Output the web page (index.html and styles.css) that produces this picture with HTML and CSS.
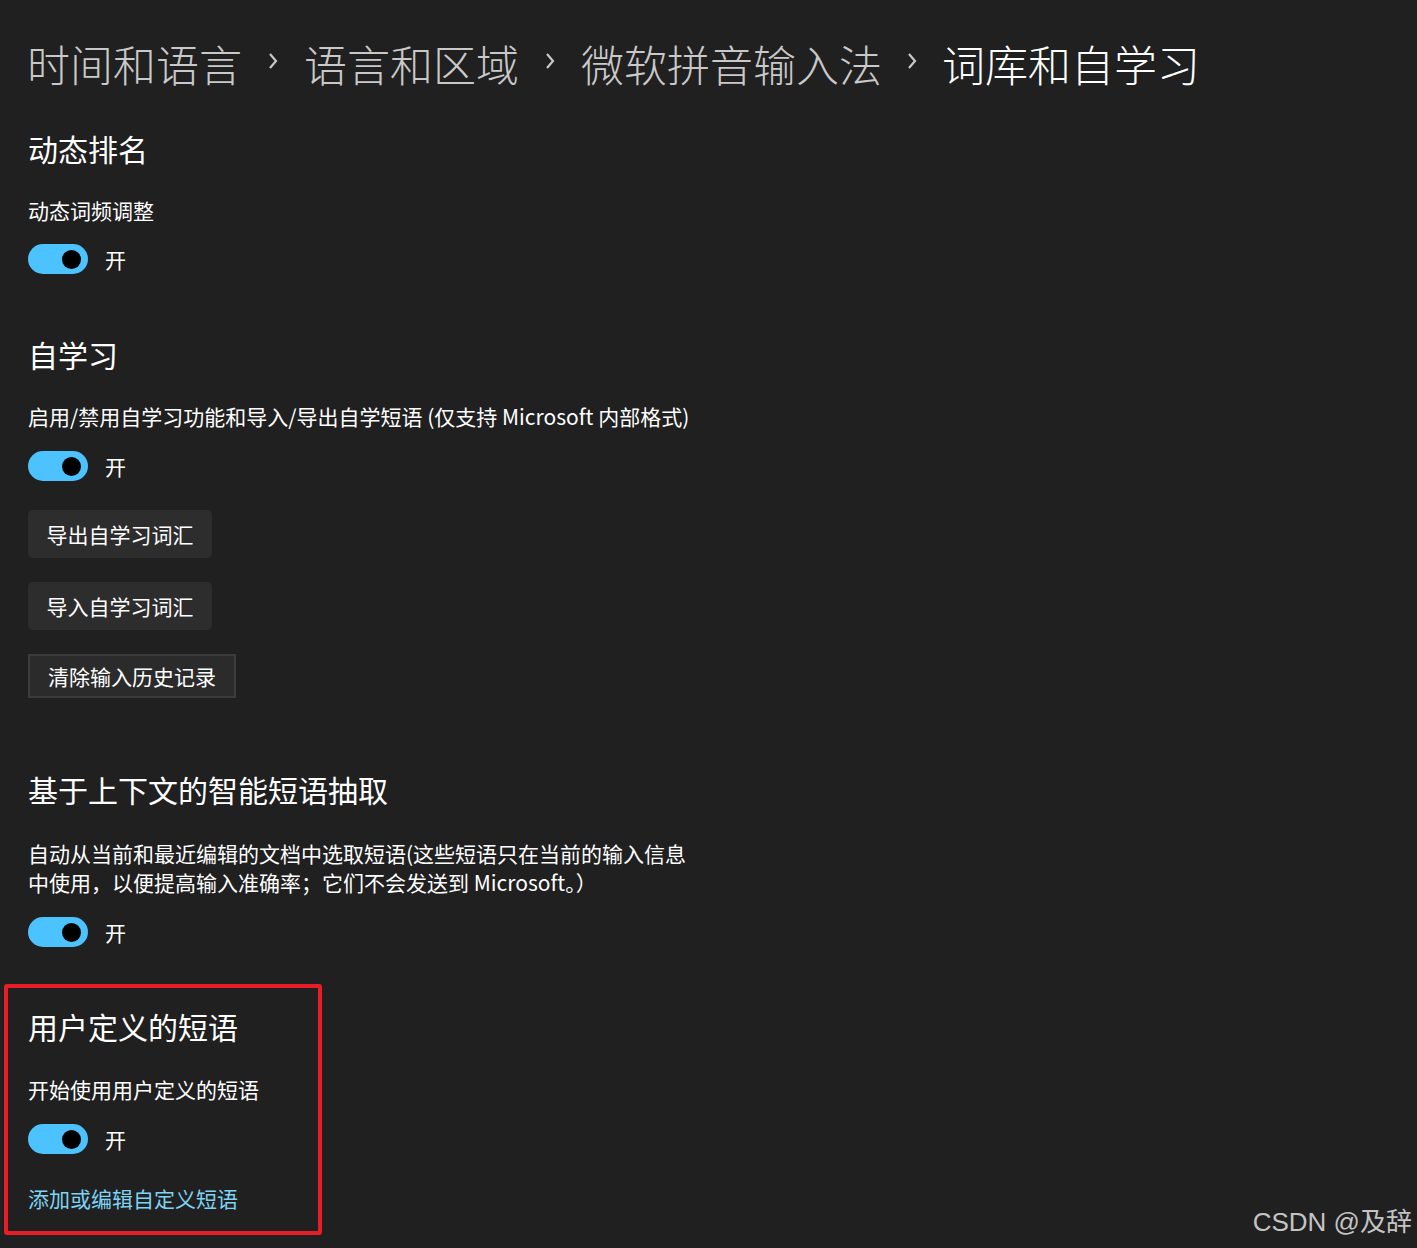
FILE: index.html
```html
<!DOCTYPE html>
<html lang="zh-CN">
<head>
<meta charset="utf-8">
<link rel="stylesheet" href="styles.css">
</head>
<body>
<div class="page">
  <nav class="crumbs">
    <span class="crumb">时间和语言</span>
    <span class="sep"><svg width="14" height="20" viewBox="0 0 14 20"><polyline points="4,3 10,10 4,17" fill="none" stroke="#c8c8c8" stroke-width="2.2"/></svg></span>
    <span class="crumb">语言和区域</span>
    <span class="sep"><svg width="14" height="20" viewBox="0 0 14 20"><polyline points="4,3 10,10 4,17" fill="none" stroke="#c8c8c8" stroke-width="2.2"/></svg></span>
    <span class="crumb">微软拼音输入法</span>
    <span class="sep last"><svg width="14" height="20" viewBox="0 0 14 20"><polyline points="4,3 10,10 4,17" fill="none" stroke="#c8c8c8" stroke-width="2.2"/></svg></span>
    <span class="crumb current">词库和自学习</span>
  </nav>

  <section class="sec first">
    <h2 class="heading">动态排名</h2>
    <p class="label">动态词频调整</p>
    <div class="toggle-row"><span class="toggle"><span class="knob"></span></span><span class="state">开</span></div>
  </section>

  <section class="sec s2">
    <h2 class="heading">自学习</h2>
    <p class="label">启用/禁用自学习功能和导入/导出自学短语 (仅支持 Microsoft 内部格式)</p>
    <div class="toggle-row r2"><span class="toggle"><span class="knob"></span></span><span class="state">开</span></div>
    <div class="btns">
      <button class="btn">导出自学习词汇</button>
      <button class="btn">导入自学习词汇</button>
      <button class="btn square">清除输入历史记录</button>
    </div>
  </section>

  <section class="sec s3">
    <h2 class="heading">基于上下文的智能短语抽取</h2>
    <p class="label desc">自动从当前和最近编辑的文档中选取短语(这些短语只在当前的输入信息中使用，以便提高输入准确率；它们不会发送到 Microsoft。）</p>
    <div class="toggle-row r2"><span class="toggle"><span class="knob"></span></span><span class="state">开</span></div>
  </section>

  <section class="sec boxed">
    <h2 class="heading">用户定义的短语</h2>
    <p class="label lb">开始使用用户定义的短语</p>
    <div class="toggle-row r2"><span class="toggle"><span class="knob"></span></span><span class="state">开</span></div>
    <a class="link">添加或编辑自定义短语</a>
  </section>
</div>
<div class="watermark">CSDN @及辞</div>
</body>
</html>
```

FILE: styles.css
```css
html, body {
  margin: 0;
  padding: 0;
  background: #202020;
  height: 100%;
}
body {
  font-family: "Noto Sans CJK SC", "Open Sans", sans-serif;
  color: #ffffff;
  position: relative;
  overflow: hidden;
}
.page {
  padding: 34px 0 0 27px;
}
.crumbs {
  display: flex;
  align-items: center;
  height: 58px;
  font-size: 43px;
  line-height: 58px;
  font-weight: 300;
}
.crumb {
  color: #c9c9c9;
  white-space: nowrap;
}
.crumb.current {
  color: #ffffff;
}
.sep {
  width: 62px;
  display: flex;
  justify-content: center;
  align-items: center;
  margin-top: -4px;
}
.sep.last { width: 60px; }
.sep svg { display: block; }

.heading {
  margin: 0 0 0 1px;
  font-size: 30px;
  line-height: 40px;
  font-weight: 400;
  white-space: nowrap;
}
.label {
  margin: 28px 0 0 1px;
  font-size: 21px;
  line-height: 29px;
  font-weight: 400;
}
.label.lb { margin-top: 29px; }
.desc {
  width: 670px;
  margin-top: 30px;
}
.toggle-row {
  display: flex;
  align-items: center;
  gap: 17px;
  height: 30px;
  margin: 19px 0 0 1px;
  font-size: 21px;
}
.toggle-row.r2 { margin-top: 20px; }
.toggle {
  width: 60px;
  height: 30px;
  border-radius: 15px;
  background: #4cc2ff;
  display: flex;
  align-items: center;
  justify-content: flex-end;
  padding-right: 7px;
  box-sizing: border-box;
}
.knob {
  width: 19px;
  height: 19px;
  border-radius: 50%;
  background: #000;
}
.state {
  line-height: 30px;
}
.sec.first { margin-top: 36px; }
.sec.s2 { margin-top: 60px; }
.sec.s3 { margin-top: 71px; }
.btns {
  display: flex;
  flex-direction: column;
  align-items: flex-start;
  gap: 24px;
  margin: 29px 0 0 1px;
}
.btn {
  font-family: inherit;
  font-size: 21px;
  color: #fff;
  background: #2d2d2d;
  border: none;
  border-radius: 5px;
  height: 48px;
  width: 184px;
  padding: 0;
  line-height: 48px;
  text-align: center;
}
.btn.square {
  height: 44px;
  width: 208px;
  border-radius: 0;
  border: 2px solid #3c3c3c;
  background: #2b2b2b;
  line-height: 38px;
}
.sec.boxed {
  margin: 37px 0 0 -23px;
  width: 318px;
  box-sizing: border-box;
  border: 4px solid #e81d25;
  border-radius: 3px;
  padding: 18px 0 18px 19px;
}
.link {
  display: block;
  margin: 30px 0 0 1px;
  font-size: 21px;
  line-height: 29px;
  color: #7ed3f4;
}
.watermark {
  position: absolute;
  right: 5px;
  bottom: 9px;
  font-family: "Liberation Sans", "Noto Sans CJK SC", sans-serif;
  font-size: 26px;
  line-height: 34px;
  color: #c4c4c4;
}
```
